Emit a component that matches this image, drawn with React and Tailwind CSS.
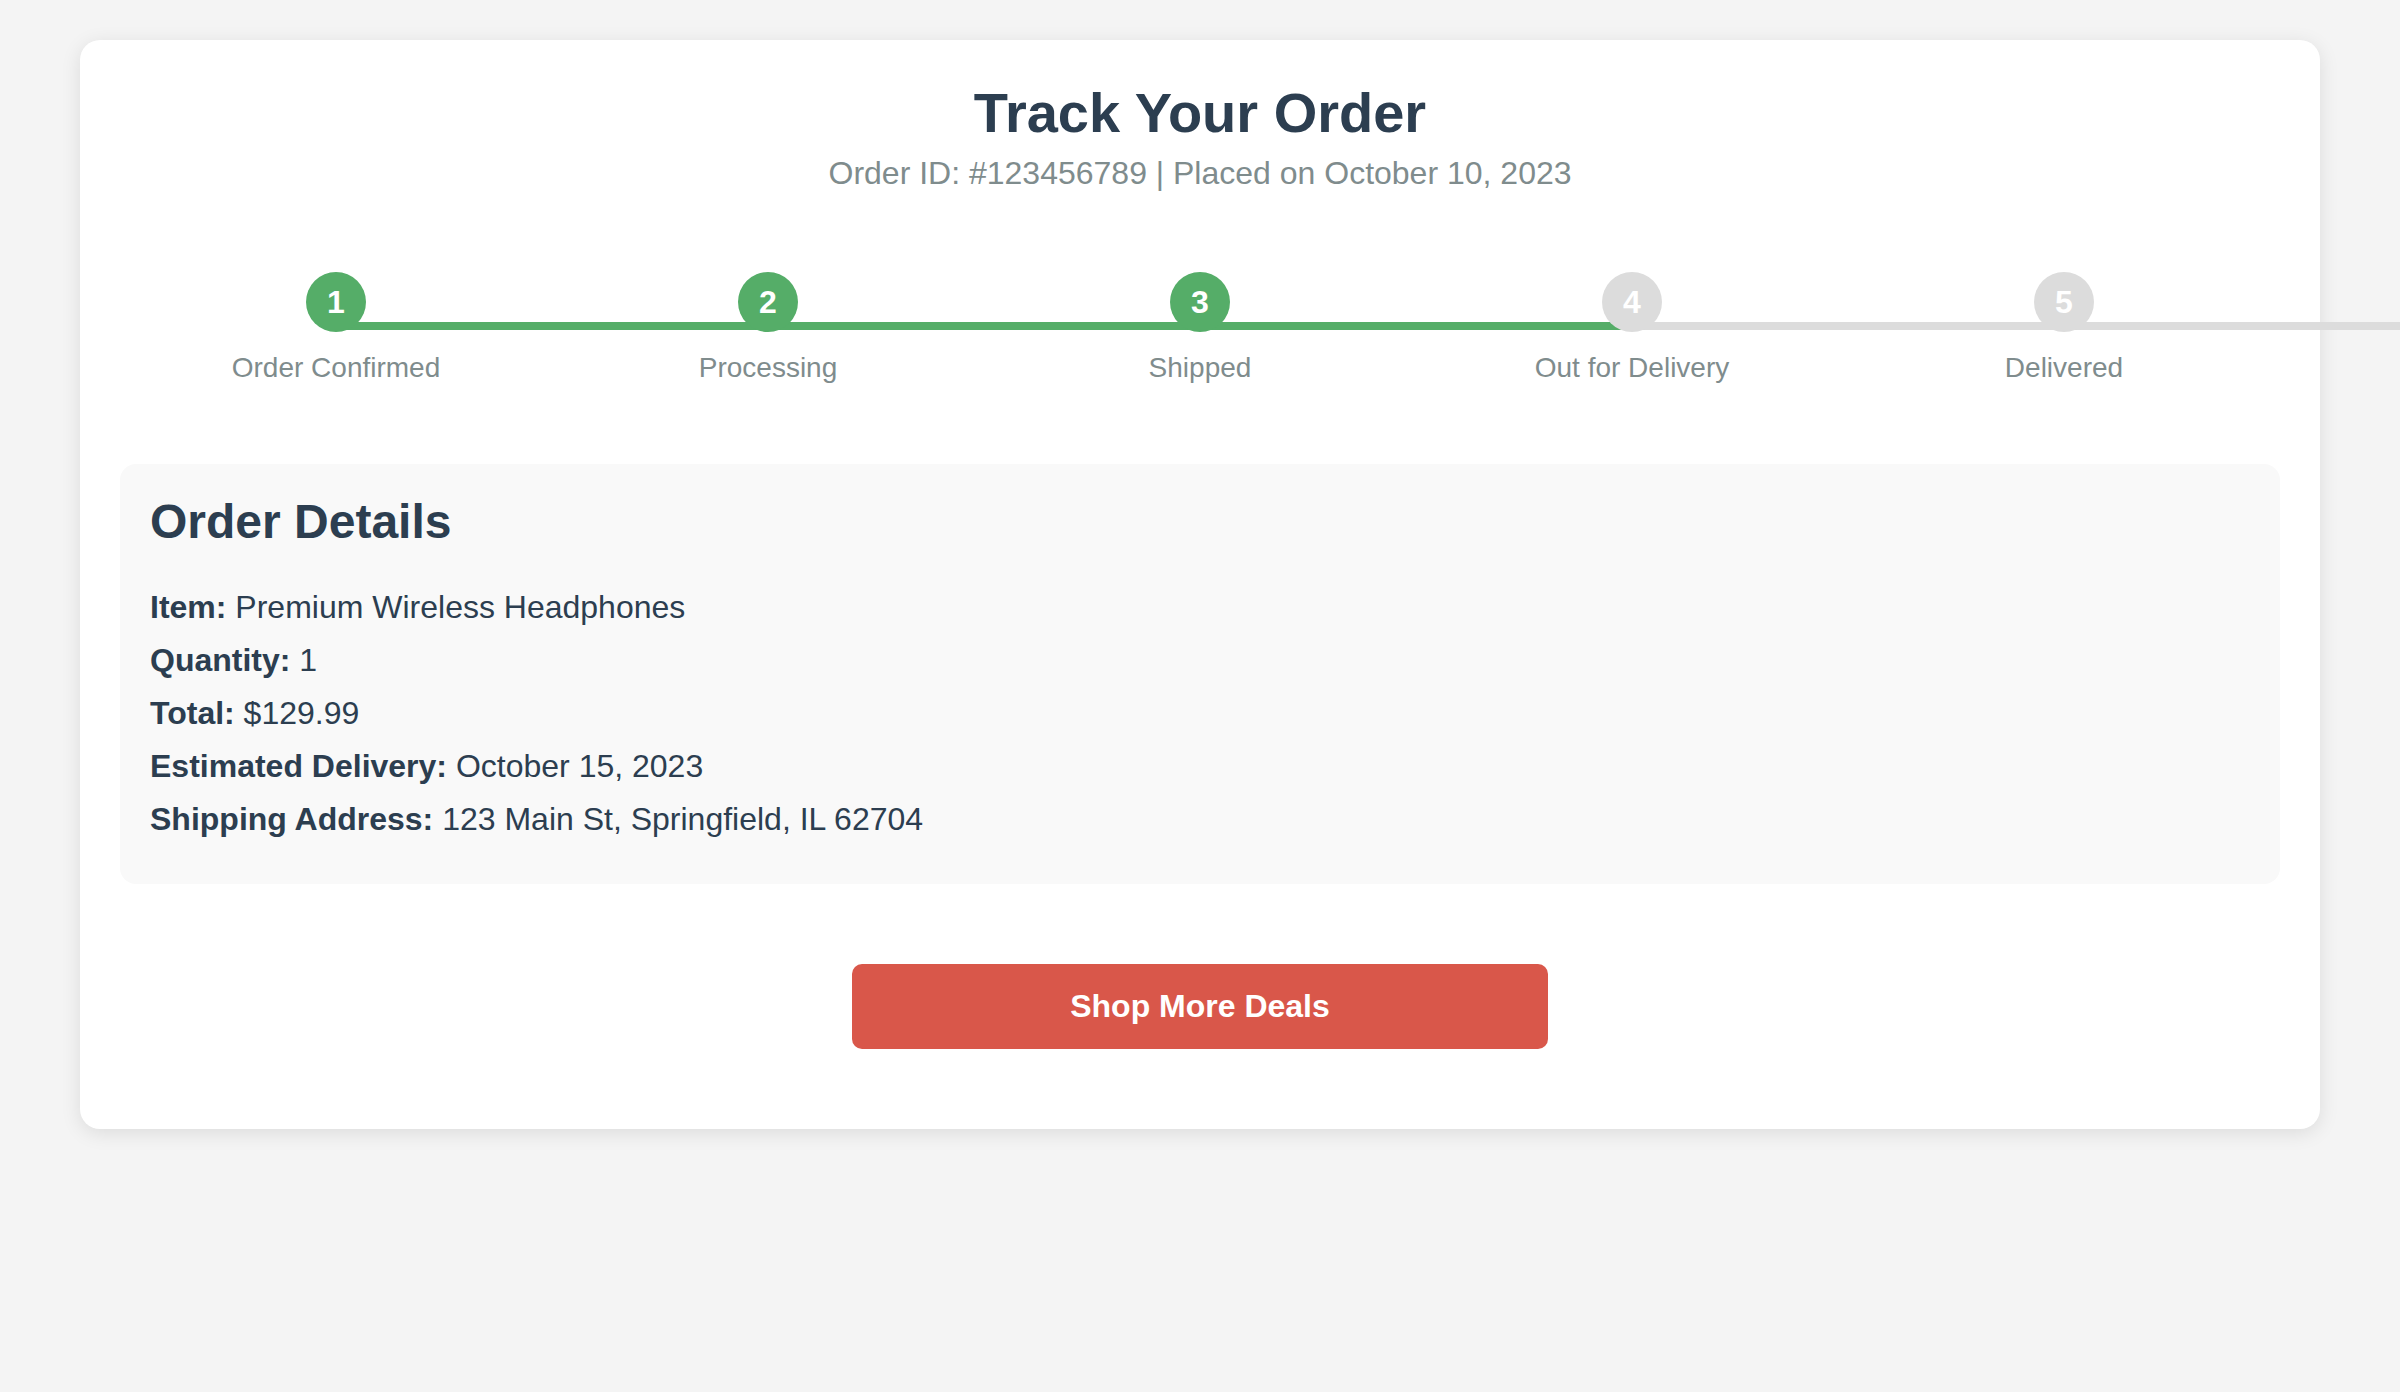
const steps = [
    { n: 1, label: "Order Confirmed", done: true },
    { n: 2, label: "Processing", done: true },
    { n: 3, label: "Shipped", done: true },
    { n: 4, label: "Out for Delivery", done: false },
    { n: 5, label: "Delivered", done: false },
]

const details = [
    ["Item:", "Premium Wireless Headphones"],
    ["Quantity:", "1"],
    ["Total:", "$129.99"],
    ["Estimated Delivery:", "October 15, 2023"],
    ["Shipping Address:", "123 Main St, Springfield, IL 62704"],
]

const Step = ({ n, label, done, lineDone }) => {
    return (
        <div className="relative flex-1 flex flex-col items-center">
            <div className={`absolute top-[50px] left-1/2 w-full h-[8px] ${lineDone ? "bg-[#55ad68]" : "bg-[#dcdcdc]"}`} />
            <div className={`relative z-10 w-[60px] h-[60px] rounded-full flex items-center justify-center text-white font-bold text-[32px] leading-none ${done ? "bg-[#55ad68]" : "bg-[#dcdcdc]"}`}>
                {n}
            </div>
            <p className="mt-[20px] text-[28px] leading-[normal] text-[#7f8c8d]">{label}</p>
        </div>
    )
}

const App = () => {
    return (
        <div className="min-h-screen overflow-x-hidden bg-[#f4f4f4] pt-[40px] px-[80px] font-['Liberation_Sans',Arial,sans-serif]">
            <div className="bg-white rounded-[20px] shadow-[0_4px_20px_rgba(0,0,0,0.1)] p-[40px]">
                <div className="text-center">
                    <h1 className="text-[56px] font-bold leading-[normal] text-[#2c3e50]">Track Your Order</h1>
                    <p className="mt-[10px] text-[32px] leading-[normal] text-[#7f8c8d]">
                        Order ID: #123456789 | Placed on October 10, 2023
                    </p>
                </div>

                <div className="flex mt-[80px]">
                    {steps.map((s) => (
                        <Step key={s.n} {...s} lineDone={s.n <= 3} />
                    ))}
                </div>

                <div className="mt-[80px] bg-[#f9f9f9] rounded-[16px] pt-[30px] px-[30px] pb-[46px] text-[#2c3e50]">
                    <h2 className="text-[48px] font-bold leading-[normal]">Order Details</h2>
                    <div className="mt-[40px] flex flex-col gap-[16px]">
                        {details.map(([k, v]) => (
                            <p key={k} className="text-[32px] leading-[normal]">
                                <span className="font-bold">{k}</span> {v}
                            </p>
                        ))}
                    </div>
                </div>

                <div className="mt-[80px] mb-[40px] flex justify-center">
                    <button className="w-[696px] py-[24px] rounded-[10px] bg-[#d9574a] text-white font-bold text-[32px] leading-[normal]">
                        Shop More Deals
                    </button>
                </div>
            </div>
        </div>
    )
}

export default App
